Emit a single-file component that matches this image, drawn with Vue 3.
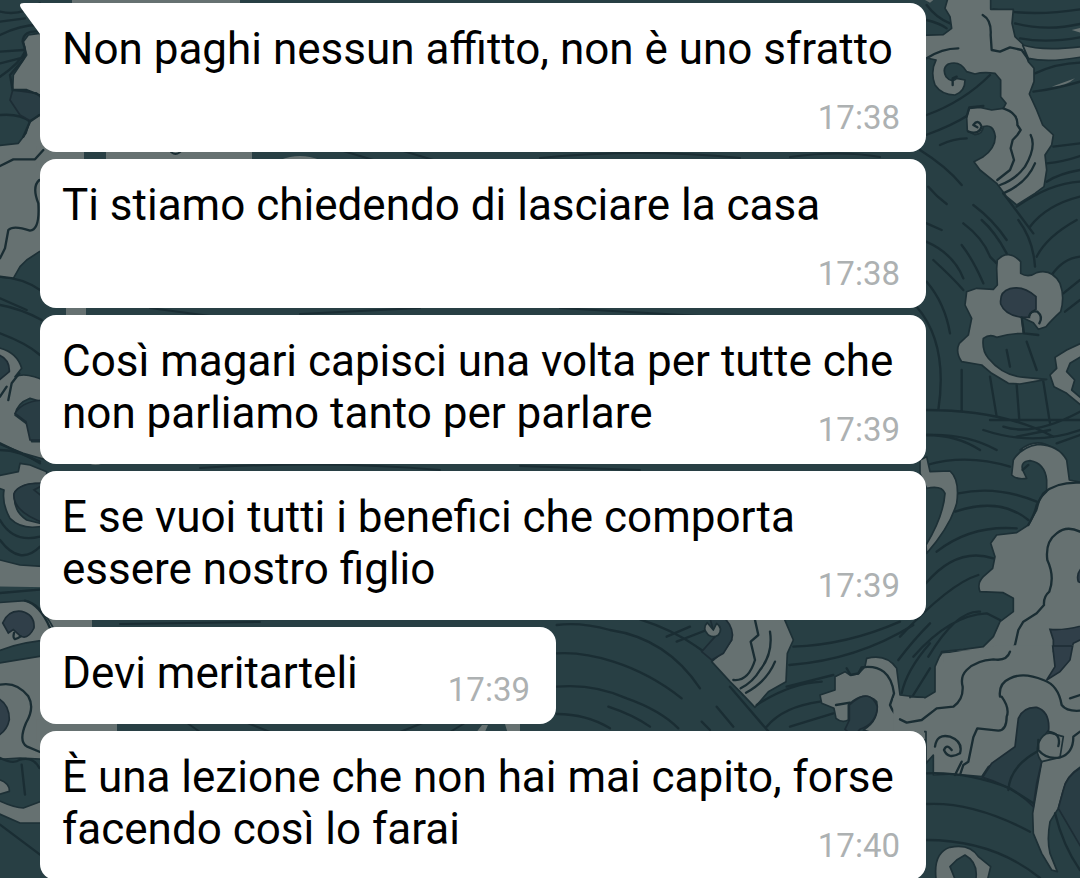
<script setup>
const messages = [
  { text: 'Non paghi nessun affitto, non è uno sfratto', time: '17:38' },
  { text: 'Ti stiamo chiedendo di lasciare la casa', time: '17:38' },
  { text: 'Così magari capisci una volta per tutte che non parliamo tanto per parlare', time: '17:39' },
  { text: 'E se vuoi tutti i benefici che comporta essere nostro figlio', time: '17:39' },
  { text: 'Devi meritarteli', time: '17:39' },
  { text: 'È una lezione che non hai mai capito, forse facendo così lo farai', time: '17:40' },
]
</script>

<template>
  <main class="chat">
    <svg class="wallpaper" viewBox="0 0 1080 878" preserveAspectRatio="xMidYMid slice" aria-hidden="true">
      <rect width="1080" height="878" fill="#283f44" />

      <!-- slivers between bubbles -->
      <path class="patch" d="M72 -5H240V10H72Z M30 148H84V162H30Z M106 148H252V162H106Z M66 304H86V318H66Z M84 460Q95 470 108 460Z M46 616H92V630H46Z M30 720H117V734H30Z M280 160Q300 152 320 160Z M475 734L482 725H488L484 734Z M505 724H520V734H508Z" />
      <path class="sliver" d="M168 148Q175 160 184 148 M340 150L380 162 M400 150L440 162 M540 158Q640 148 740 158 M790 157Q840 150 880 157 M150 308L210 316 M300 314L420 308 M560 308L700 316 M200 468Q330 460 440 470 M520 466L640 470 M120 624L260 622 M180 718L200 732 M240 720L270 732 M400 732L430 720 M450 732L470 720" />

      <!-- upper right -->
      <g transform="translate(900 0) scale(.33333)">
        <path class="wave" d="M280 28Q400 50 540 28 M345 70Q440 95 540 72 M360 115Q440 130 540 112 M405 220Q470 190 540 188 M400 275Q460 268 540 245 M80 345Q190 305 270 225 M78 405Q160 375 205 345 M120 435Q160 415 200 415 M60 450Q140 500 185 555 M85 560Q110 590 140 612 M220 615Q280 660 320 720 M460 440L540 430 M440 490Q490 485 540 468 M440 545Q480 520 540 510 M350 620Q450 550 540 545 M390 680Q440 615 540 590 M310 580L400 700 M80 15Q110 55 150 70 M80 60Q120 70 140 85" />
        <path class="cloud" d="M145 -10H272V28H340L336 70L345 110L368 132L385 185L402 205V245L388 282L410 330L428 375L460 405L455 435L435 465L440 510L432 560L405 580L350 615L320 590L290 550L240 510L222 485L250 470Q285 445 286 410Q280 370 250 380Q248 402 225 404L202 392L200 350L208 325L240 322L275 330L310 325L318 310L302 290V240L285 220Q250 215 225 222L200 215Q180 180 145 192Q125 205 138 230Q155 250 170 235L195 240Q195 275 165 285Q125 285 105 255Q90 215 108 180L60 170V106L130 104L155 85L150 50L135 25Z" />
        <path class="cloud" d="M368 135Q430 155 560 138V168Q450 190 385 175Z" />
        <path class="patch" d="M455 260L525 235Q500 258 455 260Z M515 90L550 82V100Z M75 0H100L90 8Z" />
        <path class="ink" d="M248 45Q275 60 272 105L275 150L300 155L330 142L365 150L385 178 M80 175Q125 145 175 145 M158 255V235L170 230 M310 325Q355 340 352 375L362 390L352 405L338 420L332 445L342 480L330 510L292 540 M392 405Q410 440 375 500Q345 540 300 555 M405 490Q380 550 310 580 M205 395Q238 405 245 380Q235 355 220 375L232 382 M200 350L208 322L250 318" />
      </g>

      <!-- middle right -->
      <g transform="translate(900 220) scale(.33333)">
        <path class="wave" d="M80 10L125 30 M78 65Q160 100 190 175 M185 75Q220 120 250 190 M190 10Q250 55 270 110L290 130 M245 0Q285 35 320 100 M355 0Q400 60 405 140 M410 110Q440 50 530 0 M455 165Q490 115 540 110 M490 220L540 180 M495 275L540 240 M100 120Q160 175 190 210 M80 185Q135 250 150 340 M50 260Q145 370 115 570 M185 450V575 M270 470L290 590 M350 495L358 600 M430 485L450 610 M320 390L330 440 M380 365L410 450 M78 570Q310 570 460 650 M80 645Q200 640 290 690 M270 600L540 600 M310 620Q400 650 540 575" />
        <path class="cloud" d="M290 145L292 120Q325 85 362 125V160Q385 175 410 158Q455 145 480 190Q495 230 482 275Q455 300 438 320L415 328L400 308L365 292L370 340Q330 340 290 352Q270 340 250 355Q245 390 265 415Q310 470 375 472L440 478L360 492L325 490L275 460L245 435L185 425Q165 395 178 370L205 345L215 295L195 255L200 215L230 205L280 208L292 195Z" />
        <path class="cloud" d="M560 362L500 390L465 412L470 445L450 465L462 500L500 520L560 570V548L515 510L524 480L500 455L510 430L560 400Z M360 690Q410 650 460 685V690Z" />
        <path class="hollow" d="M302 252Q298 215 330 206Q370 195 408 230L408 268Q385 282 388 292L365 292Q315 285 302 252Z" />
        <path class="ink" d="M388 288Q392 270 412 275Q430 290 418 310 M365 292L372 340L415 345" />
      </g>

      <!-- coral on the right -->
      <g transform="translate(900 430) scale(.33333)">
        <path class="wave" d="M80 15Q170 15 240 60 M80 105Q200 70 330 110 M175 190Q290 165 410 215 M165 245Q300 200 385 270 M110 365Q210 285 350 295 M78 460Q170 350 280 385 M0 620Q150 460 235 435 M40 680Q150 555 260 550L300 570 M85 680Q170 540 240 545 M250 0Q400 50 540 0 M350 20L450 0 M470 40L540 15" />
        <path class="cloud" d="M60 90L80 80L90 125L150 123Q180 150 170 220Q150 290 80 370L78 345Q130 260 135 190Q125 165 80 175L60 130Z" />
        <path class="cloud" d="M335 135L340 90Q365 50 415 43Q475 45 500 90L508 150L560 160V690H115L125 665L190 658L250 650L280 620L300 575L340 545V505L310 488L240 485Q230 460 250 440L278 415L285 380L272 340L290 315L350 308L385 285L410 240L420 205L440 185V150Q435 100 390 92Q360 95 368 120L380 145Q350 150 335 135Z" />
        <path class="ink" d="M540 305Q500 285 470 310Q435 335 442 390Q465 440 448 485Q430 500 432 525L410 550L370 575L355 600L345 645L310 690 M385 285Q405 250 410 225L430 190Q470 155 540 158 M368 120L385 105" />
        <path class="hollow" d="M560 400Q525 425 535 455L560 465Z M560 583Q500 602 450 598L460 630V690H505L520 640L560 620Z" />
      </g>

      <!-- waves and coral below the fourth bubble -->
      <g transform="translate(540 610) scale(.33333)">
        <path class="wave" d="M50 45Q120 35 210 60Q380 85 480 235 M50 130Q130 125 220 155Q330 190 425 265 M50 230Q160 220 260 265Q360 300 415 355 M50 312Q140 312 210 355 M205 290Q280 315 330 350 M530 290L580 350 M485 335L510 360 M300 28Q400 60 470 110Q550 160 610 255 M380 80L450 50 M410 95L500 60" />
      </g>
      <g transform="translate(730 610) scale(.33333)">
        <path class="cloud" d="M-20 20H160L190 90L172 130L168 215L115 245L75 292L30 245L0 215L-55 155L-20 125L5 90Z" />
        <path class="hollow deep" d="M-60 25H-15Q15 60 5 90L-20 130L-55 150L-85 125L-45 80Z" />
        <path class="cloud" d="M-65 75Q-85 55-68 38L-50 60L-40 40Q-20 55-35 75Q-50 85-65 75Z" />
        <path class="ink" d="M75 30L85 75L62 95L75 150Q55 215 10 210 M120 65Q130 130 90 180Q70 215 32 235 M135 155Q110 215 48 248" />
        <path class="wave" d="M190 110Q350 105 510 35 M178 165Q380 150 550 45 M170 230L310 195 M80 285Q180 220 275 215 M110 350Q160 290 270 275 M0 230L120 370 M180 350L310 310 M505 150Q550 90 600 40 M515 250Q530 180 600 100 M550 255L600 175" />
        <path class="cloud" d="M315 200L345 185L360 195L385 192L405 170L410 145Q470 130 500 175L510 255L600 265V390H500L400 360Q450 330 440 275Q410 245 370 272L355 285V330Q335 340 318 325L312 295L275 280L270 255L315 240Z" />
        <path class="hollow deep" d="M358 285L370 275Q420 235 442 290Q440 340 390 358L370 380L345 358L358 330V285Z" />
        <path class="ink" d="M318 285L360 278 M350 175L362 195L385 190L395 172Q480 160 492 250L480 285Q500 335 550 335L600 315 M550 265L600 265" />
      </g>

      <!-- lower right -->
      <g transform="translate(900 650) scale(.33333)">
        <path class="cloud" d="M30 140L75 143L105 125V50L118 20L126 8L190 4H560V340Q500 370 490 420L475 475L450 515Q440 570 450 610L472 665L455 660L425 610L400 550L398 490L410 420L425 335L390 340L360 300L330 312L265 350L245 380L160 372L100 375V315L78 340V245H30Z" />
        <path class="patch" d="M130 12L190 2L250 -4L290 -14H458V36H130Z M515 -14H560V20H515Z M-20 145H72V300H-20Z" />
        <path class="hollow deep" d="M248 382L275 340L345 290L355 205Q370 170 410 172Q450 185 446 240L420 275L415 300L425 335L410 400L400 470Q340 410 248 382Z" />
        <path class="hollow" d="M458 -12L465 50L440 90L480 65L510 30L518 -12Z" />
        <path class="hollow deep" d="M560 345Q500 370 490 420L475 475L560 620Z" />
        <path class="cloud" d="M425 335Q405 310 415 280Q430 245 455 250L490 260L480 322Z" />
        <path class="ink" d="M330 5Q320 35 280 28Q230 30 200 60Q180 80 188 110Q190 150 160 170L110 175L65 210L20 218L0 208 M300 140Q295 100 330 85Q370 65 430 90Q475 105 485 165Q500 185 540 182 M305 140Q330 175 320 200Q320 240 295 242L232 235L220 262L205 335L190 345L180 375 M105 290Q110 250 150 260Q190 275 180 310Q145 330 132 300Q140 280 155 300 M445 245Q485 250 475 288 M415 270V300Q440 330 480 322Q520 310 520 260L540 245 M510 145L540 135 M165 375L185 335" />
        <path class="wave" d="M80 370Q200 365 330 415L400 460 M80 462Q220 455 390 545 M78 570Q280 570 420 684 M325 420Q330 350 410 305 M465 490Q490 590 540 660" />
        <path class="cloud" d="M110 700Q95 610 150 592Q210 580 235 620L272 650L260 700H225Q240 640 195 615L170 630L150 650L170 700Z" />
      </g>

      <!-- upper left -->
      <g transform="scale(.33333)">
        <path class="wave" d="M0 35Q60 50 120 10 M0 65L75 55 M0 105Q60 75 115 75 M0 155L70 150 M0 190L80 170 M0 230Q60 190 78 150 M0 345Q60 340 90 365" />
        <path class="cloud" d="M150 100H118L85 105L70 125L80 165L60 195L40 225L38 270L110 280L118 300V345L90 360L78 400L55 430L-20 438V830L40 835L60 800L80 780L118 755H150Z" />
        <path class="hollow deep" d="M38 270L110 280L130 300V340L90 362L60 345L30 300Z" />
        <path class="patch" d="M110 438H180V500H110Z" />
        <path class="ink" d="M118 95Q70 90 68 125Q85 165 60 190L30 225L38 270H80L118 285 M118 345L90 365L70 410 M0 498L40 478H105L130 450 M118 540Q95 560 115 610Q120 690 90 692Q40 675 25 690L15 745L0 775" />
        <path class="wave" d="M0 830Q70 835 120 870 M0 895L80 930" />
      </g>

      <!-- middle left -->
      <g transform="translate(0 290) scale(.33333)">
        <path class="wave" d="M0 45Q60 55 125 90 M0 130Q80 160 120 195 M0 480Q60 480 120 520 M0 690Q40 760 120 740 M0 750Q60 830 120 770" />
        <path class="cloud" d="M-20 170Q50 180 65 235L45 260Q80 245 140 275V340L90 325Q50 340 45 375L85 405L95 455H140V510L70 490L-20 455Z" />
        <path class="hollow deep" d="M-20 190Q30 200 28 245L-20 285Z M140 330Q70 330 45 370L78 395L90 450H140Z" />
        <path class="ink" d="M25 330L35 280L58 250 M0 320L20 290 M0 460Q60 490 120 515" />
        <path class="cloud" d="M60 520L90 525L140 545V585Q80 570 45 605Q35 660 80 690L140 705Q70 725 30 685Q5 640 12 600L-20 590V560L55 545Z M-20 805L60 825L140 830V880H-20Z" />
        <path class="hollow deep" d="M140 580Q60 575 42 610Q35 665 140 702V630L102 600Z" />
      </g>

      <!-- lower left -->
      <g transform="translate(0 578) scale(.33333)">
        <path class="patch" d="M-20 -30H140V28L-20 25Z" />
        <path class="cloud" d="M-20 75L75 68Q120 75 160 150V185Q60 190 -20 225Z M-20 258L150 230V545L60 540L-20 545Z M-20 660Q40 690 70 690L150 660V735L60 735L-20 700Z M-20 600Q30 610 28 640L-20 655Z" />
        <path class="patch" d="M110 425H180V500H110Z" />
        <path class="hollow" d="M8 135Q25 95 65 100Q105 110 102 150Q85 185 62 175L40 155L25 165Z M-20 355Q28 370 28 425Q20 465 -20 480Z" />
        <path class="ink" d="M0 320Q50 310 85 355Q105 390 78 435Q55 490 80 505L120 522 M75 68Q120 80 150 150 M0 540Q40 560 60 545Q100 535 118 570 M65 560L75 650 M62 175Q35 195 42 165" />
        <path class="wave" d="M0 740L120 830 M0 45L118 35" />
      </g>
    </svg>

    <ol class="messages">
      <li v-for="(message, i) in messages" :key="i" class="bubble">
        <svg v-if="i === 0" class="tail" viewBox="0 0 24 32" aria-hidden="true">
          <path d="M24 0H4Q-2 0 1 5L20 31V32H24Z" fill="#fff" />
        </svg>
        <p class="text">{{ message.text }} <time class="time">{{ message.time }}</time></p>
      </li>
    </ol>
  </main>
</template>

<style>
body {
  margin: 0;
  background: #283f44;
}
</style>

<style scoped>
.chat {
  position: relative;
  overflow: hidden;
  height: 100vh;
  font-family: Roboto, "Liberation Sans", sans-serif;
}
.wallpaper {
  position: absolute;
  inset: 0;
  width: 100%;
  height: 100%;
}
.cloud {
  fill: #667171;
  stroke: #1d3036;
  stroke-width: 5;
  stroke-linejoin: round;
}
.patch {
  fill: #667171;
}
.wave,
.ink,
.sliver {
  fill: none;
  stroke: #1a2d33;
  stroke-width: 7;
  stroke-linecap: round;
  stroke-linejoin: round;
}
.sliver {
  stroke-width: 2;
}
.hollow {
  fill: #303f49;
  stroke: #1d2d35;
  stroke-width: 5;
}
.deep {
  fill: #293d44;
}
.messages {
  position: relative;
  display: flex;
  flex-direction: column;
  align-items: flex-start;
  gap: 7px;
  margin: 0;
  padding: 3px 154px 0 40px;
  list-style: none;
}
.bubble {
  position: relative;
  box-sizing: border-box;
  flex: none;
  max-width: 100%;
  padding: 20px 26px 8px 22px;
  border-radius: 16px;
  background: #fff;
}
.bubble:first-child {
  border-top-left-radius: 0;
}
.tail {
  position: absolute;
  top: 0;
  left: -20px;
  width: 24px;
  height: 32px;
}
.text {
  display: flow-root;
  margin: 0;
  color: #000;
  font-size: 44px;
  line-height: 52px;
}
.time {
  float: right;
  margin-left: 90px;
  padding-top: 17px;
  color: #adb1b2;
  font-size: 33px;
  line-height: 52px;
}
</style>
